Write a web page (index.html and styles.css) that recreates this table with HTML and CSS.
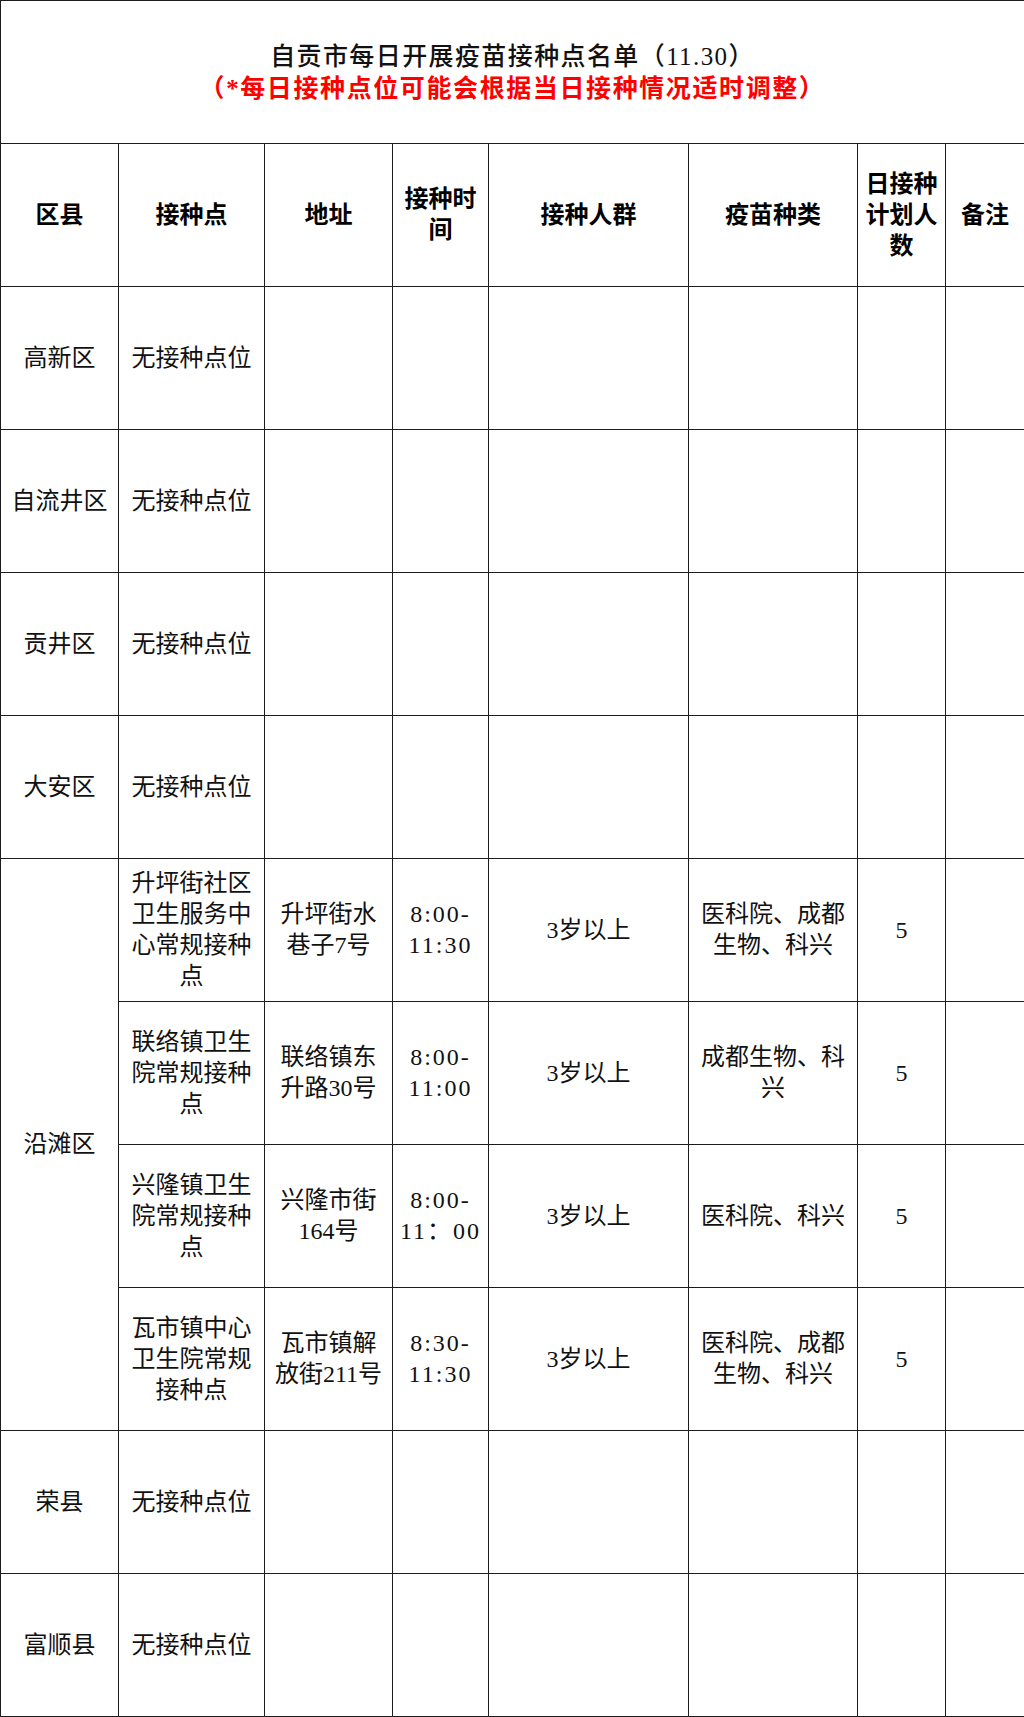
FILE: index.html
```html
<!DOCTYPE html>
<html lang="zh-CN">
<head>
<meta charset="utf-8">
<title>自贡市每日开展疫苗接种点名单</title>
<link rel="stylesheet" href="styles.css">
</head>
<body>
<table class="sheet">
  <colgroup>
    <col class="c1"><col class="c2"><col class="c3"><col class="c4">
    <col class="c5"><col class="c6"><col class="c7"><col class="c8">
  </colgroup>
  <tr class="row title-row">
    <td colspan="8" class="title">
      <div class="title-main">自贡市每日开展疫苗接种点名单（11.30）</div>
      <div class="title-note">（*每日接种点位可能会根据当日接种情况适时调整）</div>
    </td>
  </tr>
  <tr class="row head">
    <th>区县</th><th>接种点</th><th>地址</th><th>接种时间</th>
    <th>接种人群</th><th>疫苗种类</th><th class="narrow">日接种计划人数</th><th>备注</th>
  </tr>
  <tr class="row"><td>高新区</td><td>无接种点位</td><td></td><td></td><td></td><td></td><td></td><td></td></tr>
  <tr class="row"><td>自流井区</td><td>无接种点位</td><td></td><td></td><td></td><td></td><td></td><td></td></tr>
  <tr class="row"><td>贡井区</td><td>无接种点位</td><td></td><td></td><td></td><td></td><td></td><td></td></tr>
  <tr class="row"><td>大安区</td><td>无接种点位</td><td></td><td></td><td></td><td></td><td></td><td></td></tr>
  <tr class="row">
    <td rowspan="4">沿滩区</td>
    <td>升坪街社区卫生服务中心常规接种点</td>
    <td class="addr">升坪街水巷子7号</td>
    <td class="time">8:00-<br>11:30</td>
    <td>3岁以上</td>
    <td>医科院、成都生物、科兴</td>
    <td>5</td>
    <td></td>
  </tr>
  <tr class="row">
    <td>联络镇卫生院常规接种点</td>
    <td class="addr">联络镇东升路30号</td>
    <td class="time">8:00-<br>11:00</td>
    <td>3岁以上</td>
    <td>成都生物、科兴</td>
    <td>5</td>
    <td></td>
  </tr>
  <tr class="row">
    <td>兴隆镇卫生院常规接种点</td>
    <td class="addr">兴隆市街164号</td>
    <td class="time">8:00-<br>11：00</td>
    <td>3岁以上</td>
    <td>医科院、科兴</td>
    <td>5</td>
    <td></td>
  </tr>
  <tr class="row">
    <td>瓦市镇中心卫生院常规接种点</td>
    <td class="addr">瓦市镇解放街211号</td>
    <td class="time">8:30-<br>11:30</td>
    <td>3岁以上</td>
    <td>医科院、成都生物、科兴</td>
    <td>5</td>
    <td></td>
  </tr>
  <tr class="row"><td>荣县</td><td>无接种点位</td><td></td><td></td><td></td><td></td><td></td><td></td></tr>
  <tr class="row"><td>富顺县</td><td>无接种点位</td><td></td><td></td><td></td><td></td><td></td><td></td></tr>
</table>
</body>
</html>
```

FILE: styles.css
```css
html, body {
  margin: 0;
  padding: 0;
  background: #fff;
}
body {
  font-family: "Liberation Serif", "Noto Sans CJK SC", serif;
  color: #111;
}
.sheet {
  width: 1024px;
  border-collapse: collapse;
  table-layout: fixed;
}
.c1 { width: 118px; }
.c2 { width: 146px; }
.c3 { width: 128px; }
.c4 { width: 96px; }
.c5 { width: 200px; }
.c6 { width: 169px; }
.c7 { width: 88px; }
.c8 { width: 79px; }
.row { height: 143px; }
.sheet td, .sheet th {
  border: 1px solid #1c1c1c;
  padding: 0 10px;
  text-align: center;
  vertical-align: middle;
  font-size: 24px;
  line-height: 31px;
  font-weight: 400;
  overflow-wrap: anywhere;
}
.sheet th {
  font-weight: 700;
  color: #000;
}
.sheet th.narrow {
  padding: 0 6px;
}
.sheet td.addr {
  padding: 0 8px;
}
.sheet td.time {
  padding: 0 4px;
  letter-spacing: 2px;
}
.sheet td.title {
  padding: 0;
}
.title-main {
  font-size: 25px;
  line-height: 32px;
  font-weight: 500;
  letter-spacing: 1.4px;
  color: #111;
  padding-top: 2px;
}
.title-note {
  font-size: 25px;
  line-height: 32px;
  font-weight: 700;
  letter-spacing: 1.6px;
  color: #ff0000;
}
```
